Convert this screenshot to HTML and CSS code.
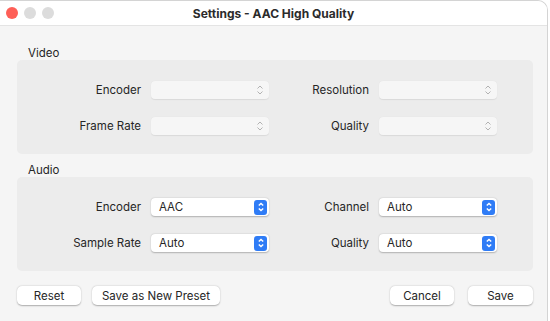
FILE: index.html
```html
<!DOCTYPE html>
<html lang="en">
<head>
  <meta charset="UTF-8" />
  <title>Settings - AAC High Quality</title>
  <link rel="stylesheet" href="styles.css">
</head>
<body>
  <div class="window">
    <div class="titlebar">
      <div class="lights">
        <span class="light red"></span>
        <span class="light"></span>
        <span class="light"></span>
      </div>
      <div class="title">Settings - AAC High Quality</div>
    </div>

    <div class="content">
      <div class="group-title first">Video</div>
      <div class="group">
        <label>Encoder</label>
        <div class="select disabled"><span></span><svg class="updown" viewBox="0 0 8 12"><path d="M1.5 4.5 4 2 6.5 4.5M1.5 7.5 4 10 6.5 7.5"/></svg></div>
        <label>Resolution</label>
        <div class="select disabled"><span></span><svg class="updown" viewBox="0 0 8 12"><path d="M1.5 4.5 4 2 6.5 4.5M1.5 7.5 4 10 6.5 7.5"/></svg></div>
        <label>Frame Rate</label>
        <div class="select disabled"><span></span><svg class="updown" viewBox="0 0 8 12"><path d="M1.5 4.5 4 2 6.5 4.5M1.5 7.5 4 10 6.5 7.5"/></svg></div>
        <label>Quality</label>
        <div class="select disabled"><span></span><svg class="updown" viewBox="0 0 8 12"><path d="M1.5 4.5 4 2 6.5 4.5M1.5 7.5 4 10 6.5 7.5"/></svg></div>
      </div>

      <div class="group-title">Audio</div>
      <div class="group">
        <label>Encoder</label>
        <div class="select"><span>AAC</span><i class="stepper"><svg viewBox="0 0 8 12"><path d="M1.8 4.6 4 2.4 6.2 4.6M1.8 7.4 4 9.6 6.2 7.4"/></svg></i></div>
        <label>Channel</label>
        <div class="select"><span>Auto</span><i class="stepper"><svg viewBox="0 0 8 12"><path d="M1.8 4.6 4 2.4 6.2 4.6M1.8 7.4 4 9.6 6.2 7.4"/></svg></i></div>
        <label>Sample Rate</label>
        <div class="select"><span>Auto</span><i class="stepper"><svg viewBox="0 0 8 12"><path d="M1.8 4.6 4 2.4 6.2 4.6M1.8 7.4 4 9.6 6.2 7.4"/></svg></i></div>
        <label>Quality</label>
        <div class="select"><span>Auto</span><i class="stepper"><svg viewBox="0 0 8 12"><path d="M1.8 4.6 4 2.4 6.2 4.6M1.8 7.4 4 9.6 6.2 7.4"/></svg></i></div>
      </div>

      <div class="buttons">
        <button class="btn reset">Reset</button>
        <button class="btn preset">Save as New Preset</button>
        <div class="spacer"></div>
        <button class="btn cancel">Cancel</button>
        <button class="btn save">Save</button>
      </div>
    </div>
  </div>
</body>
</html>
```

FILE: styles.css
```css
html, body { margin: 0; height: 100%; }
body { font-family: Inter, "Liberation Sans", sans-serif; font-size: 11.5px; color: #262626; background: #fff; overflow: hidden; }

.window { height: 321px; background: #f5f5f5; border-top: 1px solid #d4d4d4; border-right: 1px solid #d4d4d4; border-top-right-radius: 10px; box-sizing: border-box; margin-right: 2px; overflow: hidden; }

.titlebar { height: 24px; background: #fff; border-bottom: 1px solid #e4e4e4; display: flex; align-items: center; justify-content: center; position: relative; }
.lights { position: absolute; left: 6px; top: 6px; display: flex; gap: 6px; }
.light { width: 12px; height: 12px; border-radius: 50%; background: #dcdcdc; }
.light.red { background: #fe5f57; }
.title { font-weight: 700; font-size: 12px; color: #2b2b2b; }

.content { padding: 0 14px 0 17px; }
.group-title { height: 14px; line-height: 14px; margin: 9px 0 0 11px; }
.group-title.first { margin-top: 20px; }

.group { background: #ececec; border-radius: 5px; display: grid; grid-template-columns: 124px 118px 90px 118px; grid-auto-rows: 18px; column-gap: 10px; row-gap: 18px; padding: 21px 0 19px; align-items: center; }
.group label { text-align: right; }

.select { height: 18px; border-radius: 4px; background: #fff; box-shadow: 0 0.5px 1.5px rgba(0,0,0,0.25); display: flex; align-items: center; justify-content: space-between; padding: 0 2px 0 8px; box-sizing: border-box; }
.select.disabled { background: #f6f6f6; box-shadow: 0 0.5px 1px rgba(0,0,0,0.08); padding-right: 5px; }
.updown { width: 8px; height: 12px; fill: none; stroke: #b2b2b2; stroke-width: 1; }
.stepper { width: 13px; height: 15px; border-radius: 3px; background: #2f7cf6; display: flex; align-items: center; justify-content: center; }
.stepper svg { width: 8px; height: 12px; fill: none; stroke: #fff; stroke-width: 1.4; }

.buttons { display: flex; align-items: center; margin-top: 15px; gap: 11px; }
.spacer { flex: 1; }
.btn { font: inherit; color: #262626; background: #fff; border: none; border-radius: 5px; height: 19px; box-shadow: 0 0.5px 1.5px rgba(0,0,0,0.3); padding: 0; }
.reset { width: 64px; }
.preset { width: 128px; }
.cancel { width: 64px; margin-right: 3px; }
.save { width: 65px; }
```
